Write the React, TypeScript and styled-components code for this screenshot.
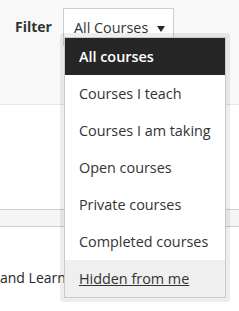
import { FC } from 'react';
import styled, { createGlobalStyle } from 'styled-components';

const options = [
  'All courses',
  'Courses I teach',
  'Courses I am taking',
  'Open courses',
  'Private courses',
  'Completed courses',
  'Hidden from me',
];

const App: FC = () => {
  const selected = 0;
  const hovered = 6;

  return (
    <>
      <GlobalStyle />
      <Page>
        <Toolbar>
          <FilterLabel>Filter</FilterLabel>
          <FilterWrap>
            <FilterButton>
              All Courses
              <Caret />
            </FilterButton>
            <MenuFrame>
              <Menu>
                { options.map((o, i) => (
                  <MenuItem key={ o } $selected={ i === selected } $hovered={ i === hovered }>{ o }</MenuItem>
                )) }
              </Menu>
            </MenuFrame>
          </FilterWrap>
        </Toolbar>
        <Spacer />
        <Band />
        <CourseRow>and Learning</CourseRow>
      </Page>
    </>
  );
};

const GlobalStyle = createGlobalStyle`
  body {
    margin: 0;
    background: #fff;
    font-family: "Open Sans", "DejaVu Sans", sans-serif;
    color: #262626;
  }
`;

const Page = styled.div`
  display: flex;
  flex-direction: column;
  width: 239px;
  height: 311px;
  overflow: hidden;
`;

const Toolbar = styled.div`
  display: flex;
  align-items: flex-start;
  height: 105px;
  padding: 8px 0 0 15px;
  box-sizing: border-box;
  background: #f8f8f8;
  border-bottom: 1px solid #e6e6e6;
  flex-shrink: 0;
`;

const FilterLabel = styled.span`
  font-size: 14px;
  font-weight: 700;
  line-height: 38px;
  color: #333;
  margin-right: 11px;
`;

const FilterWrap = styled.div`
  position: relative;
`;

const FilterButton = styled.div`
  display: flex;
  align-items: center;
  gap: 9px;
  width: 111px;
  height: 38px;
  box-sizing: border-box;
  padding: 0 0 0 10px;
  background: #fff;
  border: 1px solid #cdcdcd;
  font-size: 14.4px;
  color: #333;
`;

const Caret = styled.span`
  width: 0;
  height: 0;
  border-left: 4px solid transparent;
  border-right: 4px solid transparent;
  border-top: 6px solid #262626;
  margin-top: 3px;
`;

const MenuFrame = styled.div`
  position: absolute;
  top: 25px;
  left: -3px;
  padding: 4px;
  border-radius: 4px;
  background: rgba(0, 0, 0, 0.07);
  z-index: 2;
`;

const Menu = styled.ul`
  list-style: none;
  margin: 0;
  padding: 0;
  width: 160px;
  background: #fff;
  border: 1px solid #cacaca;
`;

interface MenuItemProps {
  $selected: boolean;
  $hovered: boolean;
}

const MenuItem = styled.li<MenuItemProps>`
  height: 37px;
  line-height: 37px;
  padding-left: 14px;
  font-size: 14.4px;
  white-space: nowrap;
  color: ${ p => p.$selected ? '#fff' : '#333' };
  background: ${ p => p.$selected ? '#262626' : p.$hovered ? '#efefef' : '#fff' };
  font-weight: ${ p => p.$selected ? 600 : 400 };
  text-decoration: ${ p => p.$hovered ? 'underline' : 'none' };
`;

const Spacer = styled.div`
  height: 104px;
  flex-shrink: 0;
`;

const Band = styled.div`
  height: 16px;
  background: #f5f5f5;
  border-top: 1px solid #cccccc;
  border-bottom: 1px solid #cccccc;
  flex-shrink: 0;
`;

const CourseRow = styled.div`
  padding-top: 41px;
  font-size: 14px;
  line-height: 20px;
  color: #262626;
  white-space: nowrap;
`;

export default App;
